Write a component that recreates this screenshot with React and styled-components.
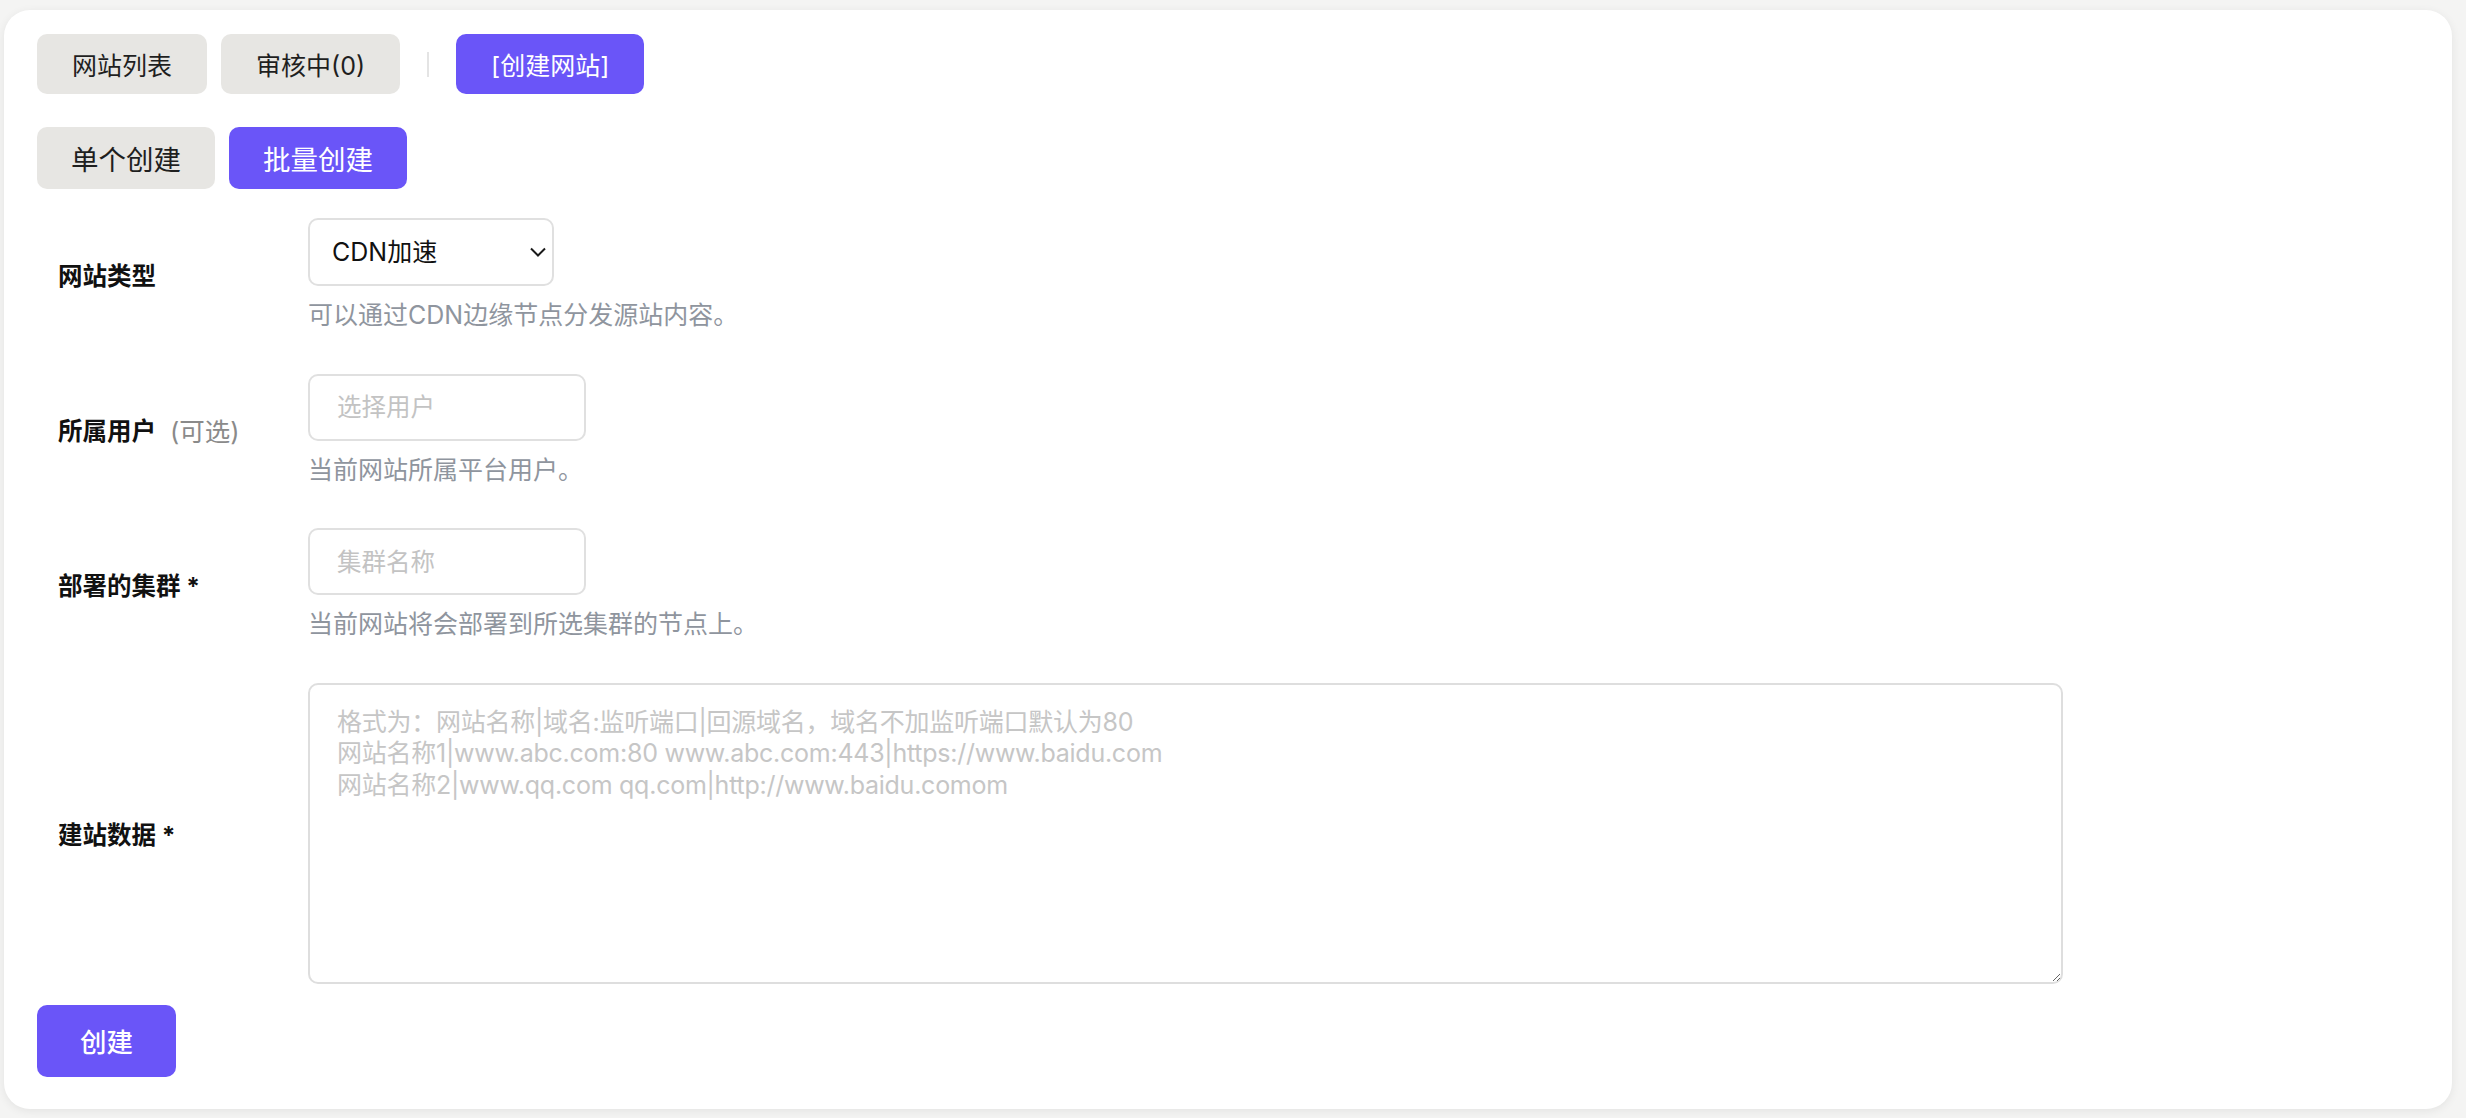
import React from "react";
import styled, { createGlobalStyle } from "styled-components";

const GlobalStyle = createGlobalStyle`
  html, body {
    margin: 0;
    padding: 0;
    background: #f4f4f3;
  }
  body {
    font-family: Inter, "Noto Sans CJK SC", sans-serif;
    color: #1c1c1c;
  }
  * { box-sizing: border-box; }
`;

const Page = styled.div`
  padding: 10px 14px 10px 4px;
`;

const Card = styled.div`
  background: #ffffff;
  border-radius: 26px;
  box-shadow: 0 2px 10px rgba(0, 0, 0, 0.07);
  padding: 24px 33px 32px 33px;
`;

const TabBar = styled.div`
  display: flex;
  align-items: center;
  gap: 14px;
`;

const Tab = styled.button`
  height: ${(p) => (p.$large ? "62px" : "60px")};
  padding: 0 ${(p) => (p.$large ? "34px" : "35px")};
  border: none;
  border-radius: 10px;
  font-family: inherit;
  font-size: ${(p) => (p.$large ? "27.5px" : "25px")};
  background: ${(p) => (p.$active ? "#6a55f8" : "#e7e6e3")};
  color: ${(p) => (p.$active ? "#ffffff" : "#1f1f1f")};
  cursor: pointer;
`;

const Divider = styled.span`
  width: 2px;
  height: 25px;
  background: #e4e4e4;
  margin: 0 13px;
`;

const ModeBar = styled(TabBar)`
  margin-top: 33px;
`;

const Form = styled.div`
  margin-top: 29px;
  display: flex;
  flex-direction: column;
  gap: 42.6px;
`;

const Row = styled.div`
  display: grid;
  grid-template-columns: 271px 1fr;
  align-items: center;
`;

const Label = styled.div`
  padding-left: 21px;
  font-size: 24.5px;
  font-weight: 700;
  color: #111;
  display: flex;
  align-items: center;
`;

const Optional = styled.span`
  font-size: 25.5px;
  font-weight: 400;
  color: #8a8a8a;
  margin-left: 14px;
`;

const Field = styled.div`
  display: flex;
  flex-direction: column;
  align-items: flex-start;
`;

const SelectWrap = styled.div`
  position: relative;
  width: 246px;
  height: 68px;
`;

const Select = styled.select`
  appearance: none;
  width: 100%;
  height: 100%;
  border: 2px solid #e0e0e0;
  border-radius: 10px;
  background: #fff;
  padding: 0 40px 0 22px;
  font-family: inherit;
  font-size: 25px;
  color: #111;
  outline: none;
`;

const Chevron = styled.svg`
  position: absolute;
  right: 7px;
  top: 50%;
  transform: translateY(-50%);
  pointer-events: none;
`;

const Input = styled.input`
  width: 278px;
  height: 67px;
  border: 2px solid #e0e0e0;
  border-radius: 10px;
  padding: 0 27px;
  font-family: inherit;
  font-size: 24.5px;
  color: #111;
  outline: none;
  &::placeholder {
    color: #c3c3c3;
  }
`;

const Hint = styled.div`
  margin-top: 13px;
  font-size: 25px;
  line-height: 32px;
  color: #8f959e;
`;

const TextArea = styled.textarea`
  width: 1755px;
  height: 301px;
  border: 2px solid #dedede;
  border-radius: 10px;
  padding: 22px 27px;
  font-family: Inter, "Noto Sans CJK SC", sans-serif;
  font-size: 25px;
  letter-spacing: -0.25px;
  line-height: 31.5px;
  color: #111;
  outline: none;
  &::placeholder {
    color: #c6c6c6;
  }
`;

const SubmitButton = styled.button`
  margin-top: 21px;
  height: 72px;
  padding: 0 43px;
  border: none;
  border-radius: 10px;
  background: #6a55f8;
  color: #fff;
  font-family: inherit;
  font-size: 26.5px;
  font-weight: 500;
  cursor: pointer;
`;

const placeholder =
  "格式为：网站名称|域名:监听端口|回源域名，域名不加监听端口默认为80\n网站名称1|www.abc.com:80 www.abc.com:443|https://www.baidu.com\n网站名称2|www.qq.com qq.com|http://www.baidu.comom";

export default function App() {
  return (
    <Page>
      <GlobalStyle />
      <Card>
        <TabBar>
          <Tab>网站列表</Tab>
          <Tab>审核中(0)</Tab>
          <Divider />
          <Tab $active>[创建网站]</Tab>
        </TabBar>
        <ModeBar>
          <Tab $large>单个创建</Tab>
          <Tab $large $active>
            批量创建
          </Tab>
        </ModeBar>
        <Form>
          <Row>
            <Label>网站类型</Label>
            <Field>
              <SelectWrap>
                <Select defaultValue="cdn">
                  <option value="cdn">CDN加速</option>
                </Select>
                <Chevron width="18" height="11" viewBox="0 0 18 11">
                  <polyline
                    points="2,2 9,9 16,2"
                    fill="none"
                    stroke="#1a1a1a"
                    strokeWidth="2"
                  />
                </Chevron>
              </SelectWrap>
              <Hint>可以通过CDN边缘节点分发源站内容。</Hint>
            </Field>
          </Row>
          <Row>
            <Label>
              所属用户<Optional>(可选)</Optional>
            </Label>
            <Field>
              <Input placeholder="选择用户" />
              <Hint>当前网站所属平台用户。</Hint>
            </Field>
          </Row>
          <Row>
            <Label>部署的集群 *</Label>
            <Field>
              <Input placeholder="集群名称" />
              <Hint>当前网站将会部署到所选集群的节点上。</Hint>
            </Field>
          </Row>
          <Row>
            <Label>建站数据 *</Label>
            <Field>
              <TextArea placeholder={placeholder} />
            </Field>
          </Row>
        </Form>
        <SubmitButton>创建</SubmitButton>
      </Card>
    </Page>
  );
}
